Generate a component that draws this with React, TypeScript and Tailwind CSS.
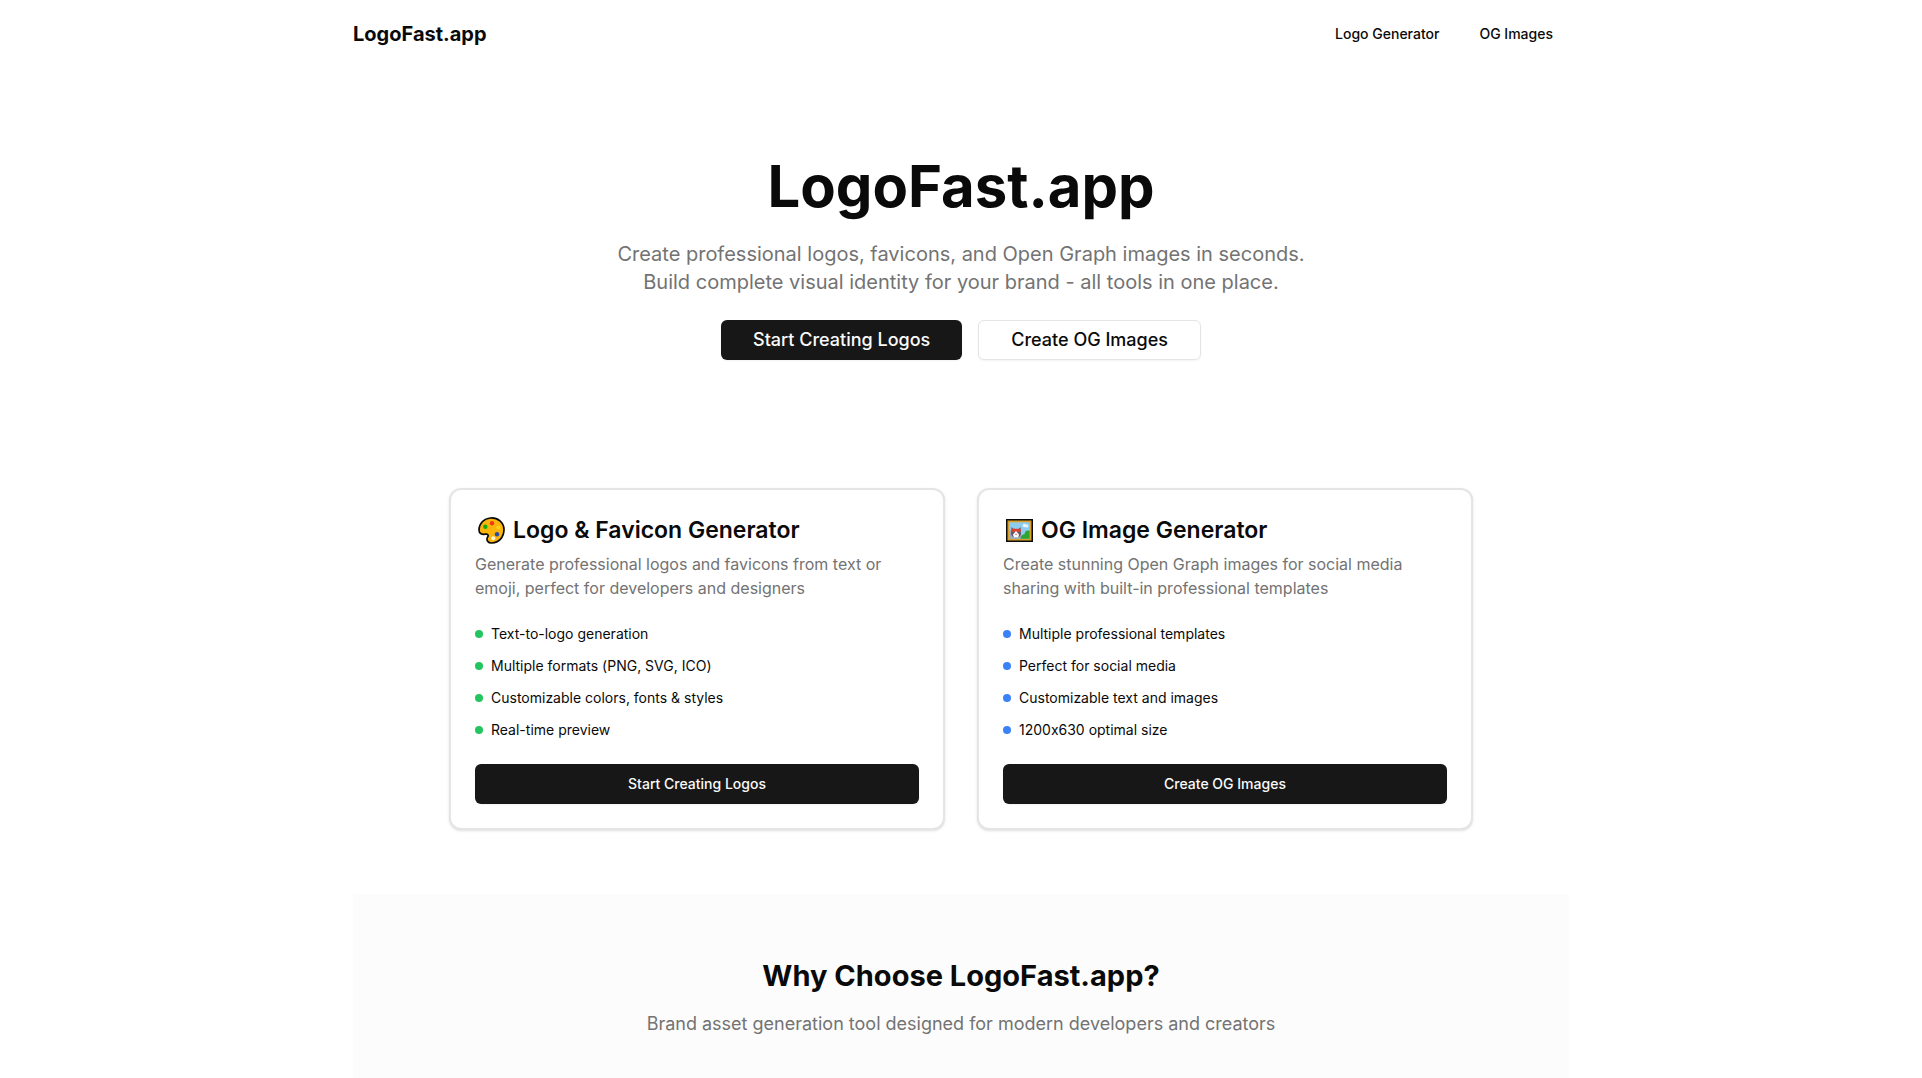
import type { ReactNode } from "react";

function Palette() {
  return (
    <svg viewBox="0 0 27 27" className="size-[27px] shrink-0" aria-hidden="true">
      <path
        d="M12.5 1C19.8.4 26 5.600 26 12.600C26 20.500 20.600 25.800 14 26C9.700 26.100 8 23 9.600 20.200C10.900 17.900 9.800 16.800 7.200 17.200C3.500 17.700 1 16.300 1 13C1 6.500 5.800 1.500 12.500 1Z"
        fill="#fbb40c"
        stroke="#0a0a0a"
        strokeWidth="1.7"
      />
      <circle cx="14" cy="6.300" r="2.200" fill="#f03a17" />
      <circle cx="7.300" cy="9.700" r="2.200" fill="#16a80c" />
      <circle cx="20.500" cy="10.500" r="2.100" fill="#ffcf1c" />
      <circle cx="19" cy="17.200" r="2.200" fill="#2a4aa8" />
      <circle cx="15.200" cy="21.300" r="2" fill="#fdf3d8" />
    </svg>
  );
}

function FramedPicture() {
  return (
    <svg viewBox="0 0 27 23" className="h-[23px] w-[27px] shrink-0" aria-hidden="true">
      <rect width="27" height="23" fill="#0a0a0a" />
      <rect x="1.500" y="1.500" width="24" height="20" fill="#d9a02c" />
      <rect x="3.300" y="3.300" width="20.400" height="16.400" fill="#8fcdf0" />
      <path d="M3.300 12L8 9L14 14L18 19.700H3.300Z" fill="#9aa9b8" />
      <circle cx="18.500" cy="6.500" r="1.800" fill="#e9f5fb" />
      <circle cx="20.800" cy="7" r="1.500" fill="#e9f5fb" />
      <path d="M14.500 19.700C15 16 17 15.500 18.500 15.300C19 11.500 21.500 11 23.700 12V19.700Z" fill="#2fa52f" />
      <path d="M5.500 8L8 10.500H12L14.500 8L15 15.500L13 18H7L5 15.500Z" fill="#5e5a66" />
      <path d="M5.500 9.800H14.600V12.800H5.500Z" fill="#e0402f" />
      <path d="M10 12L13 15.500L12.300 18.300H7.800L7 15.500Z" fill="#fff" />
      <circle cx="10" cy="15.300" r=".8" fill="#e05a6a" />
    </svg>
  );
}

type ToolCardProps = {
  icon: ReactNode;
  title: string;
  description: string;
  features: string[];
  dot: string;
  action: string;
};

function ToolCard({ icon, title, description, features, dot, action }: ToolCardProps) {
  return (
    <article className="flex flex-col rounded-xl border-2 border-neutral-200 bg-white p-6 shadow-sm">
      <h2 className="flex h-8 items-center gap-2 pl-[3px] text-[23px] font-semibold">
        {icon}
        {title}
      </h2>
      <p className="mt-1.5 text-base text-neutral-500">{description}</p>
      <ul className="mt-6 flex flex-col gap-3 text-sm">
        {features.map((feature) => (
          <li key={feature} className="flex items-center gap-2">
            <span className={`size-2 rounded-full ${dot}`} />
            {feature}
          </li>
        ))}
      </ul>
      <button className="mt-6 h-10 w-full rounded-md bg-neutral-900 text-sm font-medium text-neutral-50 shadow-xs">
        {action}
      </button>
    </article>
  );
}

export default function App() {
  return (
    <div className="min-h-screen bg-white font-['Inter',sans-serif] text-neutral-950 [font-feature-settings:'calt'_0]">
      <div className="mx-auto max-w-7xl px-8">
        <header className="flex h-17 items-center justify-between">
          <a href="#" className="text-xl font-bold">
            LogoFast.app
          </a>
          <nav className="flex gap-2 text-sm font-medium">
            <a href="#logos" className="px-4 py-2">
              Logo Generator
            </a>
            <a href="#og" className="px-4 py-2">
              OG Images
            </a>
          </nav>
        </header>

        <main>
          <section className="flex flex-col items-center pt-22 pb-32 text-center">
            <h1 className="text-[58px] leading-[60px] font-bold">LogoFast.app</h1>
            <p className="mt-6 max-w-3xl text-xl text-neutral-500">
              Create professional logos, favicons, and Open Graph images in seconds.
              <br />
              Build complete visual identity for your brand - all tools in one place.
            </p>
            <div className="mt-6 flex gap-4 text-lg font-medium">
              <button className="h-10 rounded-md bg-neutral-900 px-8 text-neutral-50 shadow-xs">
                Start Creating Logos
              </button>
              <button className="h-10 rounded-md border border-neutral-200 bg-white px-8 shadow-xs">
                Create OG Images
              </button>
            </div>
          </section>

          <section className="mx-auto grid max-w-5xl grid-cols-2 gap-8">
            <ToolCard
              icon={<Palette />}
              title="Logo & Favicon Generator"
              description="Generate professional logos and favicons from text or emoji, perfect for developers and designers"
              features={[
                "Text-to-logo generation",
                "Multiple formats (PNG, SVG, ICO)",
                "Customizable colors, fonts & styles",
                "Real-time preview",
              ]}
              dot="bg-[#22c55e]"
              action="Start Creating Logos"
            />
            <ToolCard
              icon={<FramedPicture />}
              title="OG Image Generator"
              description="Create stunning Open Graph images for social media sharing with built-in professional templates"
              features={[
                "Multiple professional templates",
                "Perfect for social media",
                "Customizable text and images",
                "1200x630 optimal size",
              ]}
              dot="bg-[#3b82f6]"
              action="Create OG Images"
            />
          </section>

          <section className="mt-16 bg-[#fcfcfc] pt-16 pb-10 text-center">
            <h2 className="text-[29px] leading-9 font-bold">Why Choose LogoFast.app?</h2>
            <p className="mt-4 text-lg text-neutral-500">
              Brand asset generation tool designed for modern developers and creators
            </p>
          </section>
        </main>
      </div>
    </div>
  );
}
